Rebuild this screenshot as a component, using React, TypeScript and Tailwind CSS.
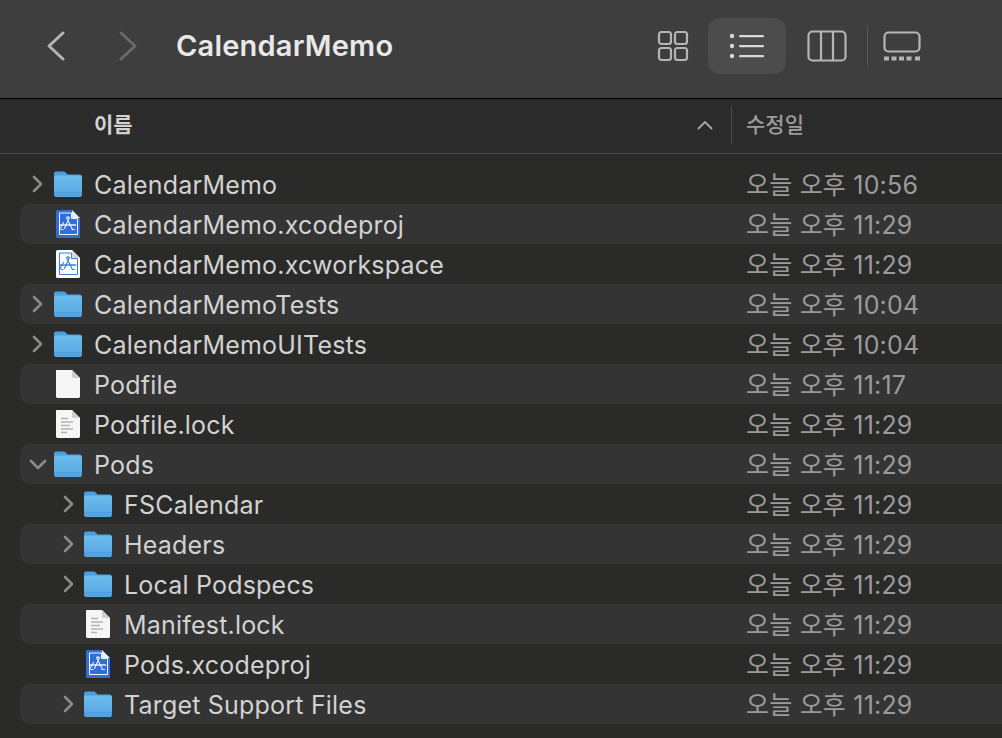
import React from 'react';

type Kind = 'folder' | 'xcode' | 'workspace' | 'blank' | 'text';

interface Item {
  name: string;
  kind: Kind;
  date: string;
  depth: number;
  chevron?: 'right' | 'down';
}

const ITEMS: Item[] = [
  { name: 'CalendarMemo', kind: 'folder', date: '오늘 오후 10:56', depth: 0, chevron: 'right' },
  { name: 'CalendarMemo.xcodeproj', kind: 'xcode', date: '오늘 오후 11:29', depth: 0 },
  { name: 'CalendarMemo.xcworkspace', kind: 'workspace', date: '오늘 오후 11:29', depth: 0 },
  { name: 'CalendarMemoTests', kind: 'folder', date: '오늘 오후 10:04', depth: 0, chevron: 'right' },
  { name: 'CalendarMemoUITests', kind: 'folder', date: '오늘 오후 10:04', depth: 0, chevron: 'right' },
  { name: 'Podfile', kind: 'blank', date: '오늘 오후 11:17', depth: 0 },
  { name: 'Podfile.lock', kind: 'text', date: '오늘 오후 11:29', depth: 0 },
  { name: 'Pods', kind: 'folder', date: '오늘 오후 11:29', depth: 0, chevron: 'down' },
  { name: 'FSCalendar', kind: 'folder', date: '오늘 오후 11:29', depth: 1, chevron: 'right' },
  { name: 'Headers', kind: 'folder', date: '오늘 오후 11:29', depth: 1, chevron: 'right' },
  { name: 'Local Podspecs', kind: 'folder', date: '오늘 오후 11:29', depth: 1, chevron: 'right' },
  { name: 'Manifest.lock', kind: 'text', date: '오늘 오후 11:29', depth: 1 },
  { name: 'Pods.xcodeproj', kind: 'xcode', date: '오늘 오후 11:29', depth: 1 },
  { name: 'Target Support Files', kind: 'folder', date: '오늘 오후 11:29', depth: 1, chevron: 'right' },
];

const FolderIcon = () => (
  <svg width="30" height="28" viewBox="0 0 30 28">
    <defs>
      <linearGradient id="folderFill" x1="0" y1="0" x2="0" y2="1">
        <stop offset="0" stopColor="#6dbcec" />
        <stop offset="1" stopColor="#55a6e2" />
      </linearGradient>
    </defs>
    <path d="M1 3.5C1 2.4 1.9 1.5 3 1.5h7.6c1 0 1.5.4 2.2 1.1L14.6 4.5H26.6C28 4.5 29 5.5 29 6.9V24.6C29 26 28 27 26.6 27H3.4C2 27 1 26 1 24.6Z" fill="#4a9ede" />
    <path d="M1 7.3C1 6.3 1.8 5.5 2.8 5.5H27.2C28.2 5.5 29 6.3 29 7.3V24.6C29 26 28 27 26.6 27H3.4C2 27 1 26 1 24.6Z" fill="url(#folderFill)" />
    <path d="M1 22.5H29M1 24.8H29" stroke="#3f8fcc" strokeWidth="0.7" opacity="0.7" />
  </svg>
);

const BuildGlyph = ({ color }: { color: string }) => (
  <g fill="none" stroke={color} strokeWidth="1.1" strokeLinecap="round" strokeLinejoin="round">
    <path d="M11.5 8.5l5.5 11M14.5 8.5l-5 11M8.5 13.5l-3.5 6" />
    <path d="M5.5 16h15" strokeWidth="1.6" />
    <path d="M11.5 8.5c1-.8 2-.8 3 0" />
    <path d="M6 20.5h2M17 20.5h2.5" />
  </g>
);

const XcodeDoc = ({ light }: { light?: boolean }) => (
  <svg width="26" height="30" viewBox="0 0 26 30">
    <path d="M2.6 1H17l8 8v18.4c0 .9-.7 1.6-1.6 1.6H2.6c-.9 0-1.6-.7-1.6-1.6V2.6C1 1.7 1.7 1 2.6 1Z" fill={light ? '#fafafa' : '#2f6fd6'} />
    <path d="M4.5 4H16.5V9.5H22.5V25.5H4.5Z" fill="none" stroke={light ? '#3d7ee0' : '#f2f6fd'} strokeWidth="1" />
    <path d="M17 1l8 8h-6.4c-.9 0-1.6-.7-1.6-1.6Z" fill={light ? '#d9d9d9' : '#e9eef7'} />
    <BuildGlyph color={light ? '#3d7ee0' : '#e8f0fc'} />
  </svg>
);

const BlankDoc = ({ lines }: { lines?: boolean }) => (
  <svg width="26" height="30" viewBox="0 0 26 30">
    <path d="M1.6 1H17l8 8v18.6c0 .8-.6 1.4-1.4 1.4H2.4c-.8 0-1.4-.6-1.4-1.4V1.6C1 1.3 1.3 1 1.6 1Z" fill="#f6f6f6" />
    <path d="M17 1l8 8h-6.4c-.9 0-1.6-.7-1.6-1.6Z" fill="#cfcfcf" />
    {lines && (
      <g stroke="#b3b3b3" strokeWidth="1.4">
        <path d="M6 9.5H13M6 13H18M6 16.5H15M6 20H18M6 23.5H12" />
      </g>
    )}
  </svg>
);

const FileIcon = ({ kind }: { kind: Kind }) => {
  if (kind === 'folder') return <FolderIcon />;
  if (kind === 'xcode') return <XcodeDoc />;
  if (kind === 'workspace') return <XcodeDoc light />;
  return <BlankDoc lines={kind === 'text'} />;
};

const Row = ({ item, striped }: { item: Item; striped: boolean }) => (
  <div
    className={`h-10 ml-5 flex items-center rounded-l-[10px] ${striped ? 'bg-[#343434]' : ''} ${
      item.depth === 1 ? 'pl-[41px]' : 'pl-[11px]'
    }`}
  >
    <div className={`w-[13px] h-[20px] flex items-center justify-center shrink-0 ${item.depth === 1 ? 'pl-px' : ''}`}>
      {item.chevron === 'right' && (
        <svg width="11" height="18" viewBox="0 0 11 18" fill="none" stroke="#8a8a8a" strokeWidth="2.6" strokeLinecap="round" strokeLinejoin="round">
          <path d="M2 2l7 7-7 7" />
        </svg>
      )}
      {item.chevron === 'down' && (
        <svg width="18" height="11" viewBox="0 0 18 11" className="shrink-0" fill="none" stroke="#8a8a8a" strokeWidth="2.6" strokeLinecap="round" strokeLinejoin="round">
          <path d="M2 2l7 7 7-7" />
        </svg>
      )}
    </div>
    <div className="w-[30px] ml-[9px] mr-[11px] flex justify-center shrink-0">
      <FileIcon kind={item.kind} />
    </div>
    <div className={`pt-1 text-[25px] tracking-[0.2px] text-[#d2d2d2] whitespace-nowrap ${item.depth === 1 ? 'w-[622px]' : 'w-[652px]'}`}>
      {item.name}
    </div>
    <div className="pt-1 text-[25px] tracking-[0.2px] text-[#9b9b9b] whitespace-nowrap">{item.date}</div>
  </div>
);

export default function App() {
  return (
    <div
      className="w-[1002px] h-[738px] overflow-hidden bg-[#2a2a29] flex flex-col"
      style={{ fontFamily: 'Inter, "Noto Sans CJK KR", sans-serif' }}
    >
      <div className="h-[99px] pb-[7px] bg-[#3e3e3e] border-b border-black flex items-center shrink-0">
        <div className="pl-[46px] flex items-center">
          <svg width="20" height="32" viewBox="0 0 20 32" fill="none" stroke="#b5b5b5" strokeWidth="3" strokeLinecap="round" strokeLinejoin="round">
            <path d="M17 3L3 16l14 13" />
          </svg>
          <svg className="ml-[52px]" width="20" height="32" viewBox="0 0 20 32" fill="none" stroke="#6a6a6a" strokeWidth="3" strokeLinecap="round" strokeLinejoin="round">
            <path d="M3 3l14 13L3 29" />
          </svg>
        </div>
        <div className="ml-[38px] w-[481px] text-[29px] tracking-[0.2px] font-semibold text-[#e8e8e8] whitespace-nowrap">CalendarMemo</div>
        <svg width="32" height="32" viewBox="0 0 32 32" fill="none" stroke="#b5b5b5" strokeWidth="2.2">
          <rect x="2" y="2" width="12" height="12" rx="2.5" />
          <rect x="18" y="2" width="12" height="12" rx="2.5" />
          <rect x="2" y="18" width="12" height="12" rx="2.5" />
          <rect x="18" y="18" width="12" height="12" rx="2.5" />
        </svg>
        <div className="ml-[19px] w-[78px] h-[56px] rounded-[12px] bg-[#4c4c4c] flex items-center justify-center">
          <svg width="36" height="26" viewBox="0 0 36 26" fill="#d8d8d8">
            <circle cx="3" cy="3" r="2.2" />
            <circle cx="3" cy="13" r="2.2" />
            <circle cx="3" cy="23" r="2.2" />
            <rect x="10" y="2" width="25" height="2.2" rx="1" />
            <rect x="10" y="12" width="25" height="2.2" rx="1" />
            <rect x="10" y="22" width="25" height="2.2" rx="1" />
          </svg>
        </div>
        <svg className="ml-[21px]" width="40" height="32" viewBox="0 0 40 32" fill="none" stroke="#b5b5b5" strokeWidth="2.2">
          <rect x="1.5" y="1.5" width="37" height="29" rx="4" />
          <path d="M14 1.5V30.5M26 1.5V30.5" />
        </svg>
        <div className="ml-5 w-px h-10 bg-[#555555]" />
        <svg className="ml-[15px]" width="38" height="30" viewBox="0 0 38 30" fill="none" stroke="#b5b5b5" strokeWidth="2.2">
          <rect x="1.5" y="1.5" width="35" height="19" rx="4" />
          <path d="M1 27.5h5M8.5 27.5h5M16 27.5h5M23.5 27.5h5M32 27.5h5" strokeWidth="4" />
        </svg>
      </div>

      <div className="h-[55px] bg-[#2b2b2b] border-b border-[#4a4a4a] flex items-center shrink-0 pb-[3px]">
        <div className="ml-[94px] w-[599px] text-[21px] font-semibold text-[#d2d2d2]">이름</div>
        <svg width="16" height="10" viewBox="0 0 16 10" fill="none" stroke="#a8a8a8" strokeWidth="1.8" strokeLinecap="round" strokeLinejoin="round" className="ml-[4px]">
          <path d="M1.5 8.5L8 2l6.5 6.5" />
        </svg>
        <div className="ml-[18px] w-px h-[38px] bg-[#4a4a4a]" />
        <div className="ml-[14px] text-[21px] font-medium text-[#9b9b9b]">수정일</div>
      </div>

      <div className="pt-[10px]">
        {ITEMS.map((item, i) => (
          <Row key={item.name} item={item} striped={i % 2 === 1} />
        ))}
      </div>
    </div>
  );
}
